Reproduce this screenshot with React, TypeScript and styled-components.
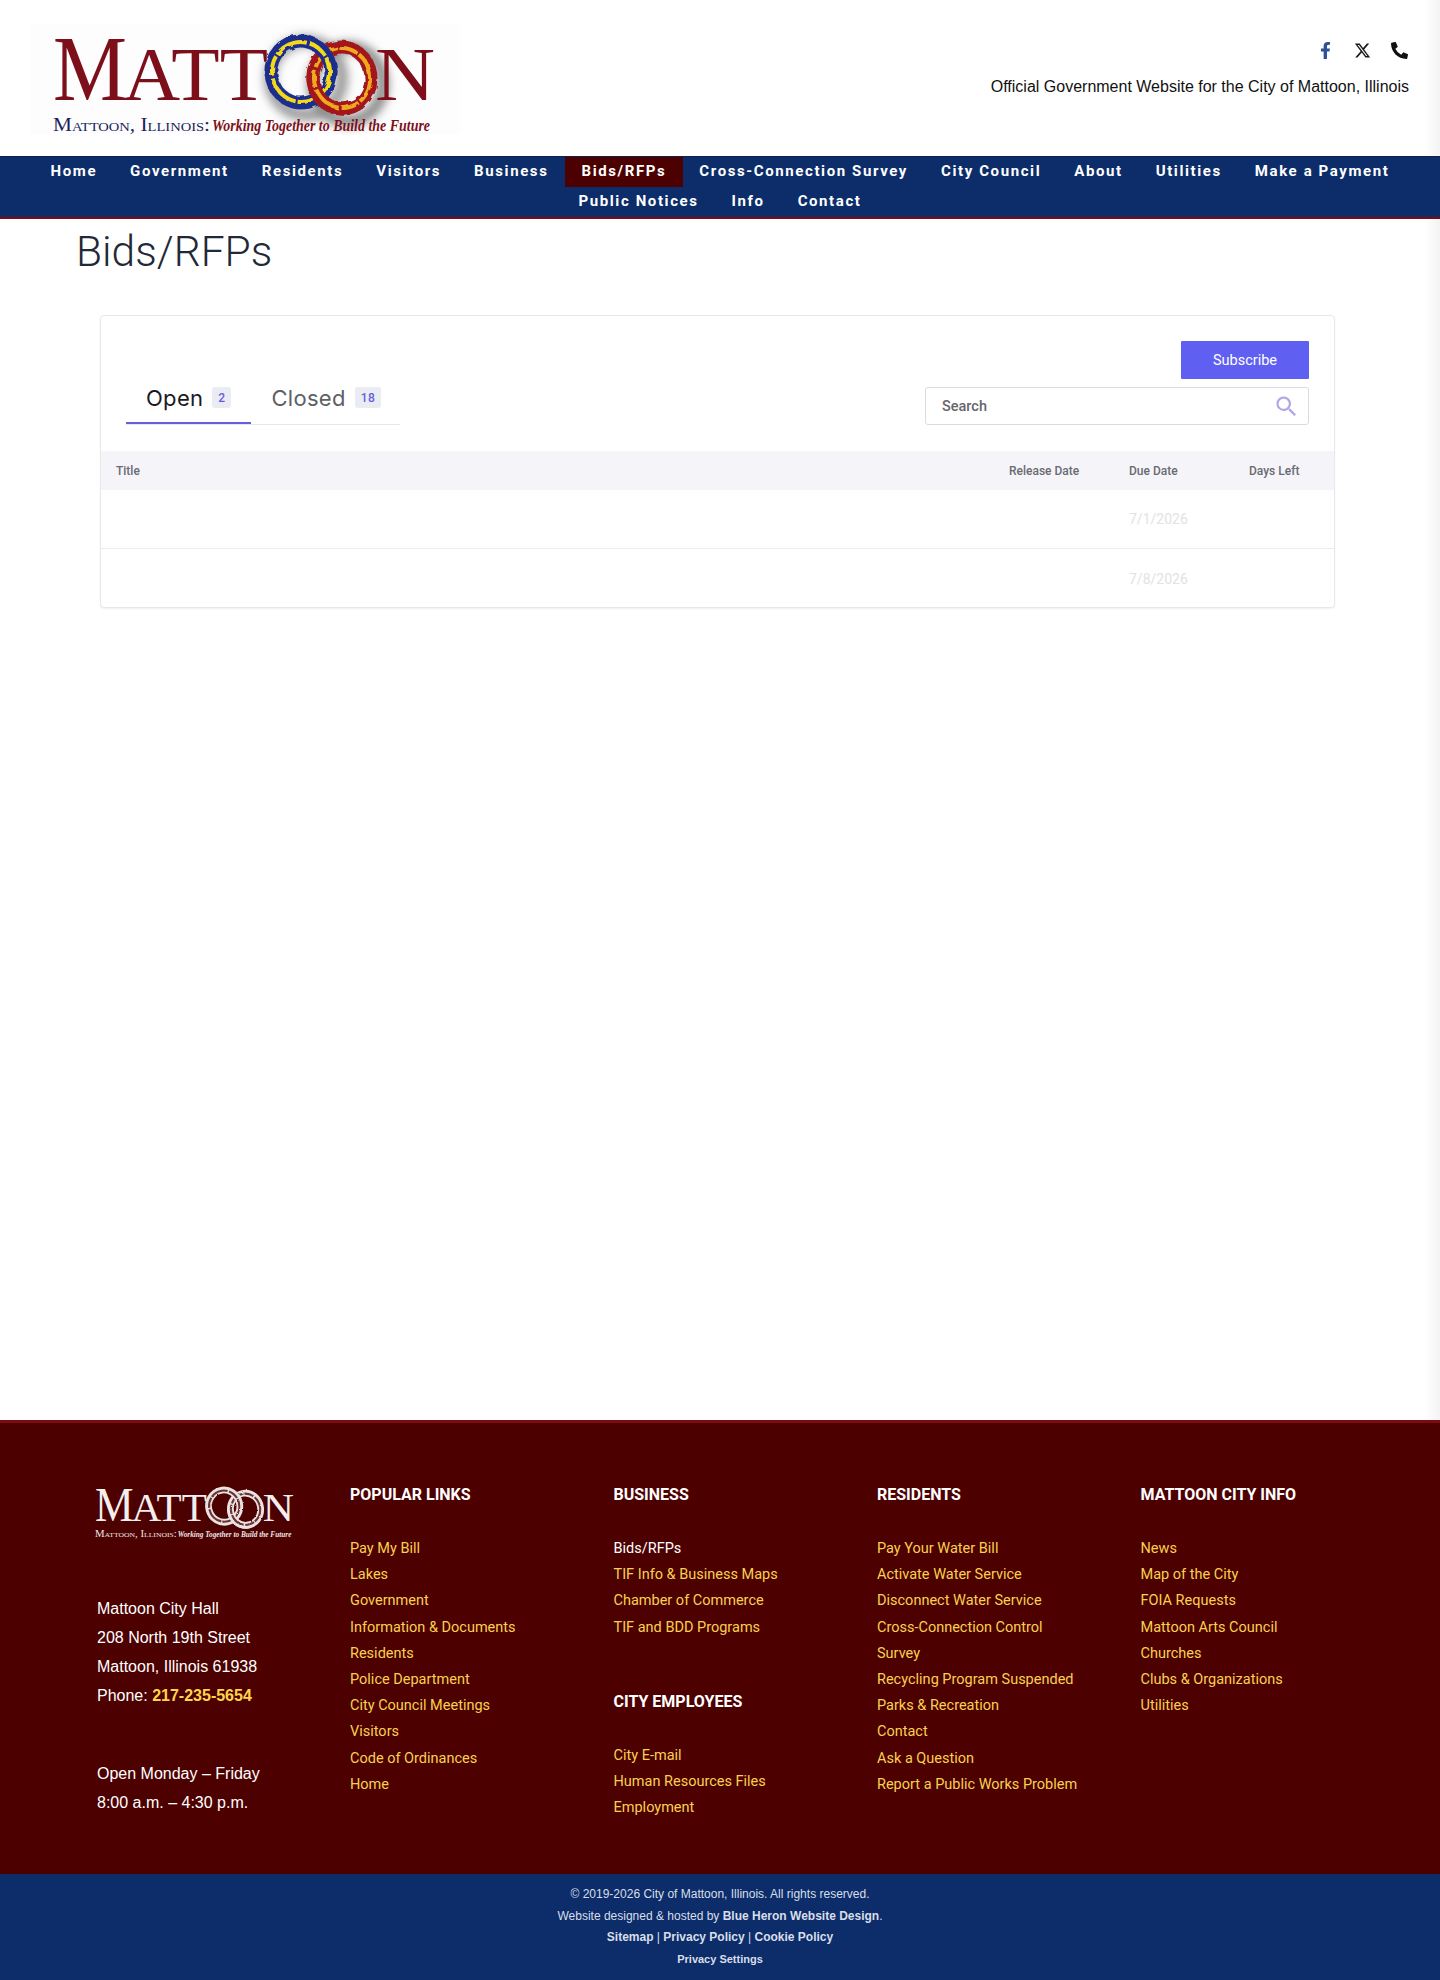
import { useId } from "react";
import styled, { createGlobalStyle } from "styled-components";
import { FaFacebookF, FaPhoneAlt } from "react-icons/fa";
import { FaXTwitter } from "react-icons/fa6";
import { MdSearch } from "react-icons/md";

const GlobalStyle = createGlobalStyle`
  html, body {
    margin: 0;
    padding: 0;
    background: #fff;
  }
  * {
    box-sizing: border-box;
  }
`;

const Root = styled.div`
  position: relative;
  min-height: 1980px;
  display: flex;
  flex-direction: column;
  font-family: "Liberation Sans", Arial, sans-serif;
  overflow: hidden;
`;
const EdgeShade = styled.div`
  position: absolute;
  top: 0;
  right: 0;
  bottom: 0;
  width: 16px;
  background: linear-gradient(to right, #ffffff, #f3f3f3);
`;
const Header = styled.header`
  position: relative;
  height: 156px;
  padding: 24px 31px 0 30px;
  display: flex;
  justify-content: space-between;
  align-items: flex-start;
`;
const LogoSvg = styled.svg<{ $small?: boolean }>`
  display: block;
  overflow: visible;
  width: ${(p) => (p.$small ? 224 : 430)}px;
  height: ${(p) => (p.$small ? 57.5 : 110)}px;
  margin: ${(p) => (p.$small ? "-2px 0 0 -14px" : "0")};
  background: ${(p) => (p.$small ? "transparent" : "#fdfdfd")};
`;
const LogoText = styled.text`
  font-family: "Liberation Serif", "Times New Roman", serif;
`;
const TagName = styled(LogoText)`
  font-variant: small-caps;
`;
const TagLine = styled(LogoText)`
  font-style: italic;
  font-weight: 700;
`;
const HeaderRight = styled.div`
  display: flex;
  flex-direction: column;
  align-items: flex-end;
  padding-top: 17px;
  gap: 18px;
`;
const Socials = styled.div`
  display: flex;
  align-items: center;
  gap: 20px;
  height: 18px;
  padding-right: 1px;
`;
const SocialLink = styled.a<{ $color: string }>`
  display: flex;
  color: ${(p) => p.$color};
  font-size: 17px;
`;
const Official = styled.div`
  font-size: 16px;
  line-height: 20px;
  color: #111;
`;
const Nav = styled.nav`
  position: relative;
  height: 63px;
  background: #0c2d69;
  border-top: 1px solid #07224f;
  border-bottom: 2px solid #7a0b12;
  display: flex;
  flex-wrap: wrap;
  justify-content: center;
  align-content: flex-start;
  padding: 0 30px;
`;
const NavItem = styled.a<{ $active?: boolean }>`
  height: 30px;
  padding: 0 16.5px 2px 16.5px;
  display: flex;
  align-items: center;
  font-family: Roboto, "Liberation Sans", sans-serif;
  font-size: 15px;
  font-weight: 700;
  letter-spacing: 1.6px;
  white-space: nowrap;
  color: #fff;
  background: ${(p) => (p.$active ? "#4c0000" : "transparent")};
`;
const Main = styled.main`
  position: relative;
  flex: 0 0 1201px;
  padding: 13px 100px 0 100px;
`;
const PageTitle = styled.h1`
  margin: 0 0 0 -24px;
  height: 40px;
  font-family: Roboto, "Liberation Sans", sans-serif;
  font-size: 42.5px;
  line-height: 40px;
  font-weight: 300;
  color: #1f2937;
`;
const Card = styled.section`
  width: 1235px;
  margin-top: 43px;
  height: 293px;
  border: 1px solid #e8e8ea;
  border-radius: 4px;
  box-shadow: 0 1px 2px rgba(0, 0, 0, 0.06);
  background: #fff;
`;
const CardTop = styled.div`
  height: 135px;
  padding: 25px 25px 0 25px;
  display: flex;
  justify-content: space-between;
  align-items: flex-end;
`;
const Tabs = styled.div`
  display: flex;
  width: 274px;
  height: 50px;
  margin-bottom: 26px;
  border-bottom: 1px solid #e8e8ec;
`;
const Tab = styled.div<{ $active?: boolean }>`
  display: flex;
  align-items: center;
  gap: 9px;
  padding: 0 20px ${(p) => (p.$active ? 2 : 4)}px 20px;
  height: 49px;
  font-family: Inter, Roboto, sans-serif;
  font-size: 22px;
  letter-spacing: 0.3px;
  color: ${(p) => (p.$active ? "#1a1a24" : "#5f5f66")};
  border-bottom: ${(p) => (p.$active ? "2px solid #6360dc" : "none")};
`;
const TabCount = styled.span`
  min-width: 19px;
  height: 21px;
  padding: 0 6px;
  display: flex;
  align-items: center;
  justify-content: center;
  font-family: Roboto, sans-serif;
  font-size: 12px;
  font-weight: 500;
  border-radius: 3px;
  color: #6360dc;
  background: #eaebf3;
`;
const Tools = styled.div`
  display: flex;
  flex-direction: column;
  align-items: flex-end;
  gap: 8px;
  margin-bottom: 26px;
`;
const SubscribeButton = styled.button`
  width: 128px;
  height: 38px;
  border: 0;
  border-radius: 1px;
  background: #5f5ff1;
  color: #fff;
  font-family: Roboto, sans-serif;
  font-size: 14.5px;
`;
const SearchBox = styled.div`
  width: 384px;
  height: 38px;
  padding: 0 8px 0 16px;
  display: flex;
  align-items: center;
  justify-content: space-between;
  border: 1px solid #dcdce0;
  border-radius: 3px;
  font-family: Roboto, sans-serif;
  font-size: 14.5px;
  font-weight: 500;
  color: #66666c;
  & svg {
    color: #b3a5ea;
    font-size: 27px;
  }
`;
const TableRow = styled.div<{ $head?: boolean }>`
  display: grid;
  grid-template-columns: 893px 120px 120px 1fr;
  align-items: center;
  padding-left: 15px;
  height: ${(p) => (p.$head ? 39 : 59)}px;
  font-family: Roboto, sans-serif;
  font-size: ${(p) => (p.$head ? 12 : 14)}px;
  font-weight: ${(p) => (p.$head ? 500 : 400)};
  color: ${(p) => (p.$head ? "#6a6a72" : "#e2e2e2")};
  background: ${(p) => (p.$head ? "#f4f4f9" : "transparent")};
  border-bottom: ${(p) => (p.$head ? "none" : "1px solid #ececee")};
  &:last-child {
    border-bottom: none;
  }
`;
const Footer = styled.footer`
  position: relative;
  flex: 0 0 454px;
  padding: 60px 0 0 97px;
  background: #4c0000;
  border-top: 3px solid #7a0b12;
  display: grid;
  grid-template-columns: 253px repeat(4, 263.5px);
  align-items: start;
`;
const AddressBlock = styled.div`
  margin-top: 55px;
  font-size: 16px;
  line-height: 29px;
  color: #fff;
`;
const Hours = styled.div`
  margin-top: 49px;
`;
const Phone = styled.strong`
  color: #ffd54a;
`;
const FooterColumn = styled.div`
  display: flex;
  flex-direction: column;
`;
const ColumnTitle = styled.h4<{ $spaced?: boolean }>`
  margin: ${(p) => (p.$spaced ? "49px" : "0")} 0 29px 0;
  font-family: Roboto, sans-serif;
  font-size: 16px;
  line-height: 24px;
  font-weight: 700;
  text-transform: uppercase;
  color: #fff;
`;
const LinkList = styled.ul`
  margin: 0;
  padding: 0;
  list-style: none;
  width: 205px;
`;
const LinkItem = styled.li<{ $plain?: boolean }>`
  font-family: Roboto, sans-serif;
  font-size: 14.5px;
  line-height: 26.2px;
  color: ${(p) => (p.$plain ? "#fff" : "#f9d04f")};
`;
const Bottom = styled.div`
  position: relative;
  flex: 0 0 106px;
  padding-top: 10px;
  background: #0c2d69;
  text-align: center;
  font-size: 12px;
  line-height: 21.5px;
  color: #d8deea;
`;
const BottomLine = styled.div<{ $small?: boolean }>`
  font-size: ${(p) => (p.$small ? 11 : 12)}px;
`;

const navLinks = [
  "Home",
  "Government",
  "Residents",
  "Visitors",
  "Business",
  "Bids/RFPs",
  "Cross-Connection Survey",
  "City Council",
  "About",
  "Utilities",
  "Make a Payment",
  "Public Notices",
  "Info",
  "Contact",
];

const popularLinks = [
  "Pay My Bill",
  "Lakes",
  "Government",
  "Information & Documents",
  "Residents",
  "Police Department",
  "City Council Meetings",
  "Visitors",
  "Code of Ordinances",
  "Home",
];
const businessLinks = ["TIF Info & Business Maps", "Chamber of Commerce", "TIF and BDD Programs"];
const employeeLinks = ["City E-mail", "Human Resources Files", "Employment"];
const residentLinks = [
  "Pay Your Water Bill",
  "Activate Water Service",
  "Disconnect Water Service",
  "Cross-Connection Control Survey",
  "Recycling Program Suspended",
  "Parks & Recreation",
  "Contact",
  "Ask a Question",
  "Report a Public Works Problem",
];
const cityLinks = [
  "News",
  "Map of the City",
  "FOIA Requests",
  "Mattoon Arts Council",
  "Churches",
  "Clubs & Organizations",
  "Utilities",
];

function Logo({ small }: { small?: boolean }) {
  const id = useId();
  const ink = small ? "#f4eeee" : "#7d0f1a";
  const blue = small ? "#e9e2e2" : "#1f2f8c";
  const red = small ? "#e9e2e2" : "#a3161c";
  const strandA = small ? "#6d3030" : "#f4d81e";
  const strandB = small ? "#6d3030" : "#f0a91e";
  const redRing = (
    <g transform="rotate(-8 342 78)">
      <ellipse cx="342" cy="78" rx="29" ry="31" fill="none" stroke={red} strokeWidth="13" />
      <ellipse cx="342" cy="78" rx="28" ry="30" fill="none" stroke={strandB} strokeWidth="4" strokeDasharray="30 2 18 3" />
    </g>
  );
  return (
    <LogoSvg $small={small} viewBox="30 24 430 110" role="img" aria-label="Mattoon">
      <defs>
        <filter id={`${id}-blur`} x="-30%" y="-30%" width="160%" height="160%">
          <feGaussianBlur stdDeviation="5" />
        </filter>
        <filter id={`${id}-rough`} x="-10%" y="-10%" width="120%" height="120%">
          <feTurbulence type="fractalNoise" baseFrequency="0.12" numOctaves="2" seed="4" />
          <feDisplacementMap in="SourceGraphic" scale="4" />
        </filter>
        <clipPath id={`${id}-lower`}>
          <rect x="290" y="78" width="60" height="45" />
        </clipPath>
      </defs>
      {!small && (
        <>
          <ellipse cx="306" cy="78" rx="36" ry="37" fill="none" stroke="#9a9a9a" strokeWidth="12" filter={`url(#${id}-blur)`} />
          <ellipse cx="348" cy="84" rx="35" ry="37" fill="none" stroke="#8a8a8a" strokeWidth="12" filter={`url(#${id}-blur)`} />
        </>
      )}
      <LogoText x="53" y="100" fontSize="94" fill={ink} textLength="74" lengthAdjust="spacingAndGlyphs">
        M
      </LogoText>
      <LogoText x="123" y="100" fontSize="77" fill={ink} textLength="145" lengthAdjust="spacingAndGlyphs">
        ATT
      </LogoText>
      <LogoText x="375" y="100" fontSize="77" fill={ink} textLength="60" lengthAdjust="spacingAndGlyphs">
        N
      </LogoText>
      <g filter={`url(#${id}-rough)`}>
        {redRing}
        <g transform="rotate(-14 301 72)">
          <ellipse cx="301" cy="72" rx="30" ry="31" fill="none" stroke={blue} strokeWidth="13" />
          <ellipse cx="301" cy="72" rx="29" ry="30" fill="none" stroke={strandA} strokeWidth="4" strokeDasharray="34 3 20 2" />
        </g>
        <g clipPath={`url(#${id}-lower)`}>{redRing}</g>
      </g>
      <TagName x="53" y="131" fontSize="19" fill={small ? "#efe6e6" : "#1c1f5c"} textLength="157" lengthAdjust="spacingAndGlyphs">
        Mattoon, Illinois:
      </TagName>
      <TagLine x="212" y="131" fontSize="16" fill={small ? "#efe6e6" : "#7d0f1a"} textLength="218" lengthAdjust="spacingAndGlyphs">
        Working Together to Build the Future
      </TagLine>
    </LogoSvg>
  );
}

export default function App() {
  return (
    <Root>
      <GlobalStyle />
      <EdgeShade />
      <Header>
        <Logo />
        <HeaderRight>
          <Socials>
            <SocialLink $color="#2f4f97">
              <FaFacebookF />
            </SocialLink>
            <SocialLink $color="#1a1a1a">
              <FaXTwitter />
            </SocialLink>
            <SocialLink $color="#111">
              <FaPhoneAlt />
            </SocialLink>
          </Socials>
          <Official>Official Government Website for the City of Mattoon, Illinois</Official>
        </HeaderRight>
      </Header>
      <Nav>
        {navLinks.map((link) => (
          <NavItem key={link} $active={link === "Bids/RFPs"}>
            {link}
          </NavItem>
        ))}
      </Nav>
      <Main>
        <PageTitle>Bids/RFPs</PageTitle>
        <Card>
          <CardTop>
            <Tabs>
              <Tab $active>
                Open <TabCount>2</TabCount>
              </Tab>
              <Tab>
                Closed <TabCount>18</TabCount>
              </Tab>
            </Tabs>
            <Tools>
              <SubscribeButton>Subscribe</SubscribeButton>
              <SearchBox>
                Search
                <MdSearch />
              </SearchBox>
            </Tools>
          </CardTop>
          <TableRow $head>
            <span>Title</span>
            <span>Release Date</span>
            <span>Due Date</span>
            <span>Days Left</span>
          </TableRow>
          <TableRow>
            <span />
            <span />
            <span>7/1/2026</span>
            <span />
          </TableRow>
          <TableRow>
            <span />
            <span />
            <span>7/8/2026</span>
            <span />
          </TableRow>
        </Card>
      </Main>
      <Footer>
        <div>
          <Logo small />
          <AddressBlock>
            <div>Mattoon City Hall</div>
            <div>208 North 19th Street</div>
            <div>Mattoon, Illinois 61938</div>
            <div>
              Phone: <Phone>217-235-5654</Phone>
            </div>
            <Hours>
              <div>Open Monday – Friday</div>
              <div>8:00 a.m. – 4:30 p.m.</div>
            </Hours>
          </AddressBlock>
        </div>
        <FooterColumn>
          <ColumnTitle>Popular Links</ColumnTitle>
          <LinkList>
            {popularLinks.map((link) => (
              <LinkItem key={link}>{link}</LinkItem>
            ))}
          </LinkList>
        </FooterColumn>
        <FooterColumn>
          <ColumnTitle>Business</ColumnTitle>
          <LinkList>
            <LinkItem $plain>Bids/RFPs</LinkItem>
            {businessLinks.map((link) => (
              <LinkItem key={link}>{link}</LinkItem>
            ))}
          </LinkList>
          <ColumnTitle $spaced>City Employees</ColumnTitle>
          <LinkList>
            {employeeLinks.map((link) => (
              <LinkItem key={link}>{link}</LinkItem>
            ))}
          </LinkList>
        </FooterColumn>
        <FooterColumn>
          <ColumnTitle>Residents</ColumnTitle>
          <LinkList>
            {residentLinks.map((link) => (
              <LinkItem key={link}>{link}</LinkItem>
            ))}
          </LinkList>
        </FooterColumn>
        <FooterColumn>
          <ColumnTitle>Mattoon City Info</ColumnTitle>
          <LinkList>
            {cityLinks.map((link) => (
              <LinkItem key={link}>{link}</LinkItem>
            ))}
          </LinkList>
        </FooterColumn>
      </Footer>
      <Bottom>
        <BottomLine>© 2019-2026 City of Mattoon, Illinois. All rights reserved.</BottomLine>
        <BottomLine>
          Website designed &amp; hosted by <strong>Blue Heron Website Design</strong>.
        </BottomLine>
        <BottomLine>
          <strong>Sitemap</strong> | <strong>Privacy Policy</strong> | <strong>Cookie Policy</strong>
        </BottomLine>
        <BottomLine $small>
          <strong>Privacy Settings</strong>
        </BottomLine>
      </Bottom>
    </Root>
  );
}
